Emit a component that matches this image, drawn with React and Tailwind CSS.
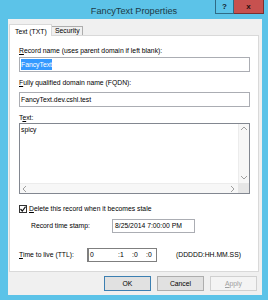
import React from 'react';

function Field({ children, className = '' }) {
  return (
    <div className={`h-[15px] border border-[#abadb3] bg-white flex items-center pl-[1px] ${className}`}>
      {children}
    </div>
  );
}

function Chevron({ dir }) {
  const d = {
    up: 'M1 5 L4 2 L7 5',
    down: 'M1 2 L4 5 L7 2',
    left: 'M5 1 L2 4 L5 7',
    right: 'M2 1 L5 4 L2 7',
  }[dir];
  return (
    <svg width="8" height="8" viewBox="0 0 8 8">
      <path d={d} fill="none" stroke="#a0a0a0" strokeWidth="1" />
    </svg>
  );
}

export default function App() {
  return (
    <div
      className="w-[268px] h-[300px] bg-[#5cc3e8] flex flex-col text-[6.8px] leading-[10px] text-black"
      style={{ fontFamily: '"Liberation Sans", Arial, sans-serif' }}
    >
      {/* Title bar */}
      <div className="h-[19px] relative flex items-center justify-center shrink-0">
        <span className="text-[9.2px] text-[#1d3a46] pt-[2px]">FancyText Properties</span>
        <div className="absolute top-0 right-[4px] flex">
          <div className="w-[19px] h-[14px] border border-[#2f6b86] border-t-0 bg-[#5cc3e8] flex items-center justify-center text-[8px] font-bold text-[#10232c]">
            ?
          </div>
          <div className="w-[30px] h-[14px] border border-[#7a2f2f] border-t-0 border-l-0 bg-[#c7514f] flex items-center justify-center text-[8px] font-bold text-[#2a1010]">
            x
          </div>
        </div>
      </div>

      {/* Dialog body */}
      <div className="flex-1 ml-[8px] mr-[6px] mb-[5px] bg-[#f0f0f0] flex flex-col">
        {/* Tabs */}
        <div className="flex items-end h-[16px] pl-[1px] pt-[5px]">
          <div className="relative z-10 w-[43px] h-[12px] -mb-[1px] bg-white border border-b-0 border-[#d9d9d9] flex items-start pl-[5px] pt-[2px]">
            Text (TXT)
          </div>
          <div className="w-[31px] h-[9px] bg-[#f0f0f0] border border-b-0 border-l-0 border-[#adadad] flex items-center pl-[3px]">
            Security
          </div>
        </div>

        {/* Panel */}
        <div className="ml-[1px] w-[250px] h-[237px] bg-white border border-[#d9d9d9] flex flex-col pl-[9px] pr-[8px] pt-[10px]">
          <div className="h-[10px]">
            <span className="underline">R</span>ecord name (uses parent domain if left blank):
          </div>
          <Field className="mt-[1px]">
            <span className="bg-[#3399ff] text-white leading-[11px] h-[11px]">FancyText</span>
          </Field>

          <div className="h-[10px] mt-[6px]">
            <span className="underline">F</span>ully qualified domain name (FQDN):
          </div>
          <Field className="mt-[4px]">FancyText.dev.cshl.test</Field>

          <div className="h-[10px] mt-[6px]">
            T<span className="underline">e</span>xt:
          </div>
          <div className="h-[71px] border border-[#828790] bg-white grid grid-cols-[1fr_11px] grid-rows-[1fr_10px]">
            <div className="pl-[1px] pt-[1px]">spicy</div>
            <div className="bg-[#f7f7f7] border-l border-[#ececec] flex flex-col justify-between items-center py-[1px]">
              <Chevron dir="up" />
              <Chevron dir="down" />
            </div>
            <div className="bg-[#f7f7f7] border-t border-[#ececec] flex justify-between items-center px-[1px]">
              <Chevron dir="left" />
              <Chevron dir="right" />
            </div>
            <div className="bg-[#e6e6e6]" />
          </div>

          <div className="h-[10px] mt-[10px] flex items-center gap-[2px]">
            <div className="w-[8px] h-[8px] border border-[#333] bg-white flex items-center justify-center">
              <svg width="6" height="6" viewBox="0 0 6 6">
                <path d="M0.5 3 L2.3 5 L5.6 0.6" fill="none" stroke="#111" strokeWidth="1.2" />
              </svg>
            </div>
            <span>
              <span className="underline">D</span>elete this record when it becomes stale
            </span>
          </div>

          <div className="h-[14px] mt-[5px] flex items-center">
            <span className="w-[93px] pl-[12px]">Record time stamp:</span>
            <div className="w-[83px] h-[14px] border border-[#abadb3] bg-white flex items-center pl-[2px]">
              8/25/2014 7:00:00 PM
            </div>
          </div>

          <div className="h-[14px] mt-[15px] flex items-center">
            <span className="w-[68px]">
              <span className="underline">T</span>ime to live (TTL):
            </span>
            <div className="w-[70px] h-[14px] border border-[#7f7f7f] border-l-2 bg-white flex items-center">
              <span className="w-[29px] pl-[1px]">0</span>
              <span className="w-[14px]">:1</span>
              <span className="w-[14px]">:0</span>
              <span>:0</span>
            </div>
            <span className="ml-[19px]">(DDDDD:HH.MM.SS)</span>
          </div>
        </div>

        {/* Buttons */}
        <div className="flex justify-end gap-[6px] pr-[5px] mt-[4px]">
          <button className="w-[47px] h-[15px] bg-[#e1e1e1] border border-[#3c7fb1] text-[6.8px] leading-[10px]">
            OK
          </button>
          <button className="w-[47px] h-[15px] bg-[#e1e1e1] border border-[#adadad] text-[6.8px] leading-[10px]">
            Cancel
          </button>
          <button className="w-[47px] h-[15px] bg-[#f4f4f4] border border-[#d0d0d0] text-[6.8px] leading-[10px] text-[#a0a0a0]">
            <span className="underline">A</span>pply
          </button>
        </div>
      </div>
    </div>
  );
}
